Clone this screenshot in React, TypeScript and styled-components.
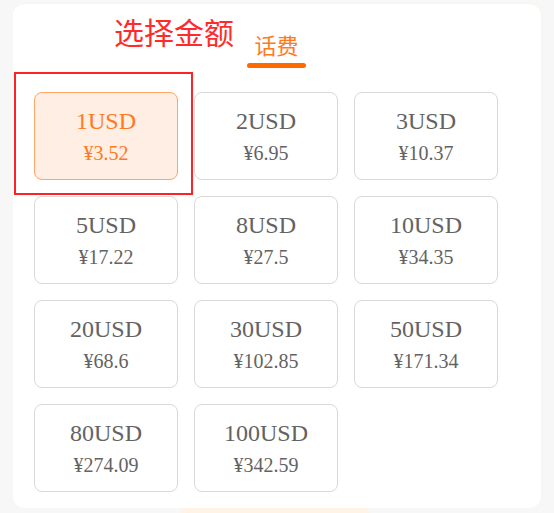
import React, { useState } from 'react';
import styled, { createGlobalStyle } from 'styled-components';

const GlobalStyle = createGlobalStyle`
  html, body {
    margin: 0;
    padding: 0;
    background: #f7f7f7;
    overflow: hidden;
  }
  body {
    font-family: "Liberation Serif", "Noto Sans CJK SC", serif;
  }
`;

const Page = styled.div`
  width: 554px;
  height: 513px;
  padding-top: 3px;
  box-sizing: border-box;
  overflow: hidden;
`;

const Panel = styled.div`
  position: relative;
  margin-left: 13px;
  width: 528px;
  height: 505px;
  background: #ffffff;
  border-top: 1px solid #fff1e4;
  border-radius: 12px;
  box-sizing: border-box;
  padding-left: 21px;
`;

const Header = styled.div`
  display: flex;
  align-items: flex-start;
  height: 88px;
  padding-left: 80px;
  padding-top: 12px;
  box-sizing: border-box;
  gap: 13px;
`;

const Title = styled.div`
  font-family: "Noto Sans CJK SC", sans-serif;
  font-size: 30px;
  line-height: 30px;
  color: #ff2b2b;
`;

const Tab = styled.div`
  display: flex;
  flex-direction: column;
  align-items: center;
  margin-top: 17px;
  width: 59px;
`;

const TabLabel = styled.div`
  font-family: "Noto Sans CJK SC", sans-serif;
  font-size: 22px;
  line-height: 22px;
  color: #ff7a1f;
`;

const TabLine = styled.div`
  margin-top: 8px;
  width: 59px;
  height: 5px;
  border-radius: 3px;
  background: #ff6a00;
`;

const Grid = styled.div`
  display: grid;
  grid-template-columns: repeat(3, 144px);
  grid-auto-rows: 88px;
  gap: 16px;
`;

const Option = styled.div<{ $active: boolean }>`
  display: flex;
  flex-direction: column;
  align-items: center;
  justify-content: center;
  box-sizing: border-box;
  border: 1px solid ${p => (p.$active ? '#ffa566' : '#d9d9d9')};
  background: ${p => (p.$active ? '#feeee3' : '#ffffff')};
  color: ${p => (p.$active ? '#ff7a1f' : '#636363')};
  border-radius: 8px;
  cursor: pointer;
`;

const Amount = styled.div`
  font-size: 24px;
  line-height: 34px;
`;

const Price = styled.div`
  font-size: 20px;
  line-height: 30px;
`;

const Highlight = styled.div`
  position: absolute;
  left: 1px;
  top: 68px;
  width: 179px;
  height: 123px;
  border: 2px solid #ff2222;
  box-sizing: border-box;
  pointer-events: none;
`;

const SubmitHint = styled.div`
  margin-left: 180px;
  width: 190px;
  height: 5px;
  border-radius: 5px 5px 0 0;
  background: #fff3e6;
`;

const options = [
  { usd: 1, cny: '3.52' },
  { usd: 2, cny: '6.95' },
  { usd: 3, cny: '10.37' },
  { usd: 5, cny: '17.22' },
  { usd: 8, cny: '27.5' },
  { usd: 10, cny: '34.35' },
  { usd: 20, cny: '68.6' },
  { usd: 30, cny: '102.85' },
  { usd: 50, cny: '171.34' },
  { usd: 80, cny: '274.09' },
  { usd: 100, cny: '342.59' },
];

export default function App() {
  const [selected, setSelected] = useState(0);

  return (
    <Page>
      <GlobalStyle />
      <Panel>
        <Header>
          <Title>选择金额</Title>
          <Tab>
            <TabLabel>话费</TabLabel>
            <TabLine />
          </Tab>
        </Header>
        <Grid>
          {options.map((o, i) => (
            <Option key={o.usd} $active={i === selected} onClick={() => setSelected(i)}>
              <Amount>{o.usd}USD</Amount>
              <Price>¥{o.cny}</Price>
            </Option>
          ))}
        </Grid>
        <Highlight />
      </Panel>
      <SubmitHint />
    </Page>
  );
}
